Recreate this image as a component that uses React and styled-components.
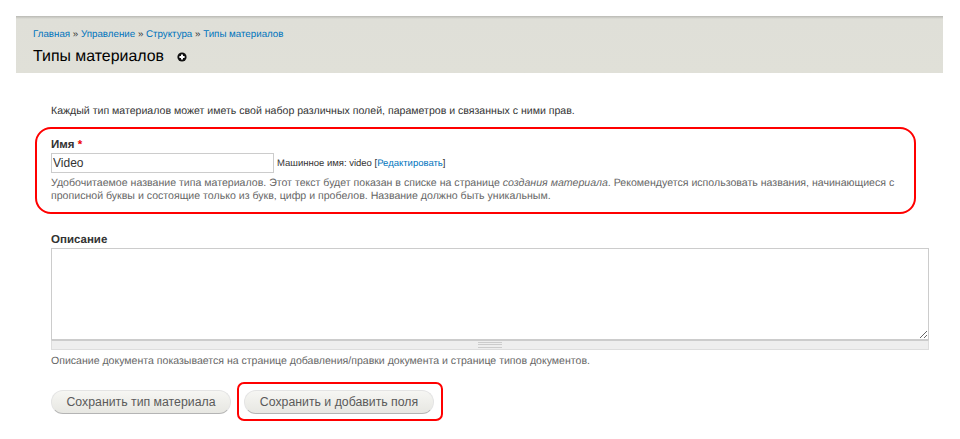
import React from 'react'
import styled, { createGlobalStyle } from 'styled-components'

const GlobalStyle = createGlobalStyle`
  html, body {
    margin: 0;
    padding: 0;
    background: #fff;
  }
  body {
    font-family: "Liberation Sans", Arial, sans-serif;
    color: #333;
    height: 439px;
    overflow: hidden;
    text-rendering: geometricPrecision;
  }
`

const Page = styled.div`
  width: 960px;
  padding-top: 16px;
`

const Header = styled.header`
  margin: 0 17px 0 16px;
  height: 57px;
  box-sizing: border-box;
  background: linear-gradient(#b9b9b4 0, #dfdfd8 3px, #e0e0d8 100%);
  padding: 13px 0 0 17px;
`

const Breadcrumb = styled.div`
  font-size: 9.75px;
  line-height: 12px;
  color: #333;
`

const Crumb = styled.a`
  color: #0074bd;
`

const TitleRow = styled.div`
  display: flex;
  align-items: center;
  margin-top: 7px;
  height: 18px;
`

const Title = styled.h1`
  margin: 0;
  font-size: 15.9px;
  font-weight: 400;
  line-height: 18px;
  color: #000;
`

const Shortcut = styled.svg`
  width: 10px;
  height: 10px;
  margin-left: 13px;
`

const Content = styled.main`
  padding: 32px 31px 0 35px;
`

const Intro = styled.p`
  margin: 0 0 9px 16px;
  font-size: 10.57px;
  line-height: 13px;
`

const Highlight = styled.div`
  box-sizing: border-box;
  width: 881px;
  height: 87px;
  border: 2px solid #f00;
  border-radius: 16px;
  padding: 9px 0 0 14px;
`

const Label = styled.label`
  display: block;
  font-size: 11.5px;
  font-weight: 700;
  line-height: 14px;
  color: #333;
`

const Required = styled.span`
  color: #e00;
`

const NameRow = styled.div`
  display: flex;
  align-items: center;
  margin-top: 1px;
`

const NameInput = styled.input`
  box-sizing: border-box;
  width: 223px;
  height: 20px;
  border: 1px solid #ccc;
  padding: 0 1px;
  font: 12px "Liberation Sans", Arial, sans-serif;
  color: #333;
  outline: none;
`

const MachineName = styled.span`
  margin-left: 3px;
  font-size: 9.5px;
  color: #333;
`

const Help = styled.div`
  margin-top: 4px;
  font-size: 10.59px;
  line-height: 13px;
  color: #666;
`

const DescriptionField = styled.div`
  margin: 19px 0 0 16px;
  width: 878px;
`

const Area = styled.textarea`
  display: block;
  box-sizing: border-box;
  width: 100%;
  height: 92px;
  margin-top: 1px;
  border: 1px solid #ccc;
  resize: vertical;
  outline: none;
`

const Grip = styled.div`
  height: 8px;
  display: flex;
  justify-content: center;
  align-items: center;
  background: #eee;
  border: 1px solid #ddd;
  border-top-color: #ccc;
`

const GripLines = styled.div`
  width: 24px;
  height: 4px;
  border-top: 1px solid #ccc;
  border-bottom: 1px solid #ccc;
  background: linear-gradient(#eee 0 1px, #ccc 1px 2px, #eee 2px);
`

const DescriptionHelp = styled.div`
  margin-top: 5px;
  font-size: 10.55px;
  line-height: 13px;
  color: #666;
`

const Actions = styled.div`
  display: flex;
  align-items: center;
  margin: 14px 0 0 16px;
`

const ButtonFrame = styled.div`
  box-sizing: border-box;
  display: flex;
  align-items: center;
  height: 39px;
  margin-left: 6px;
  padding: 0 7px 0 5px;
  border: 2px solid #f00;
  border-radius: 7px;
`

const Button = styled.button`
  box-sizing: border-box;
  width: ${(p) => p.$width}px;
  height: 24px;
  padding: 0;
  border: 1px solid #e4e4e4;
  border-bottom-color: #b4b4b4;
  border-radius: 20px;
  background: linear-gradient(#f6f6f3, #e7e7e2);
  font: 12.3px "Liberation Sans", Arial, sans-serif;
  color: #5a5a5a;
`

export default function App() {
  return (
    <Page>
      <GlobalStyle />
      <Header>
        <Breadcrumb>
          <Crumb>Главная</Crumb> » <Crumb>Управление</Crumb> » <Crumb>Структура</Crumb> » <Crumb>Типы материалов</Crumb>
        </Breadcrumb>
        <TitleRow>
          <Title>Типы материалов</Title>
          <Shortcut viewBox="0 0 10 10">
            <circle cx="5" cy="5" r="4.6" fill="#111" />
            <path d="M5 2.4v5.2M2.4 5h5.2" stroke="#fff" strokeWidth="2" />
          </Shortcut>
        </TitleRow>
      </Header>
      <Content>
        <Intro>Каждый тип материалов может иметь свой набор различных полей, параметров и связанных с ними прав.</Intro>
        <Highlight>
          <Label>Имя <Required>*</Required></Label>
          <NameRow>
            <NameInput defaultValue="Video" />
            <MachineName>Машинное имя: video [<Crumb>Редактировать</Crumb>]</MachineName>
          </NameRow>
          <Help>
            Удобочитаемое название типа материалов. Этот текст будет показан в списке на странице <em>создания материала</em>. Рекомендуется использовать названия, начинающиеся с
            <br />
            прописной буквы и состоящие только из букв, цифр и пробелов. Название должно быть уникальным.
          </Help>
        </Highlight>
        <DescriptionField>
          <Label>Описание</Label>
          <Area />
          <Grip><GripLines /></Grip>
          <DescriptionHelp>Описание документа показывается на странице добавления/правки документа и странице типов документов.</DescriptionHelp>
        </DescriptionField>
        <Actions>
          <Button $width={180}>Сохранить тип материала</Button>
          <ButtonFrame>
            <Button $width={190}>Сохранить и добавить поля</Button>
          </ButtonFrame>
        </Actions>
      </Content>
    </Page>
  )
}
